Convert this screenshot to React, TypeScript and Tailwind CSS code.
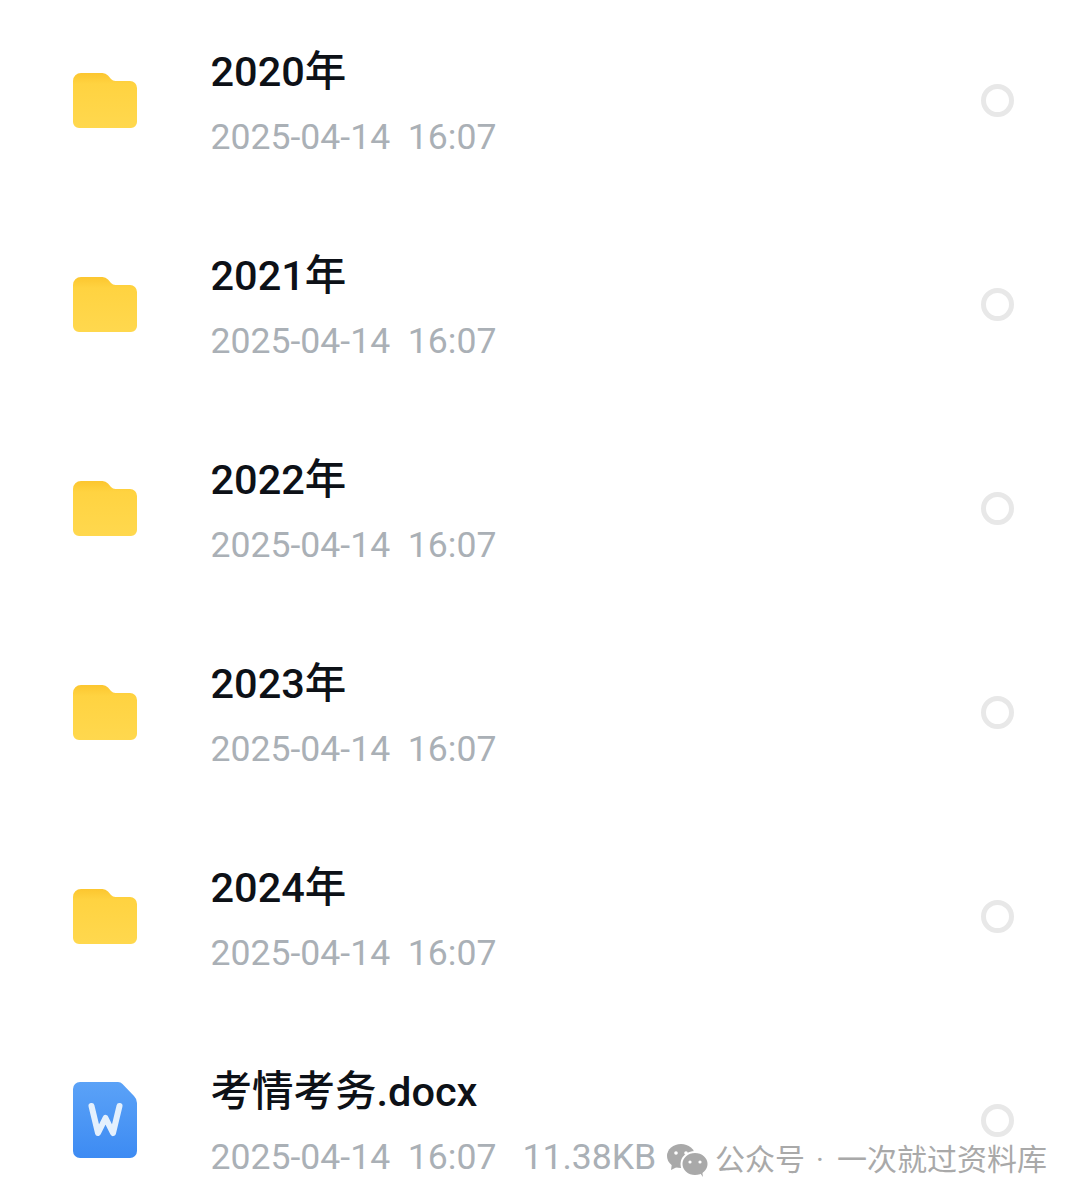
const fontStack = "font-['Roboto','Noto_Sans_CJK_SC',sans-serif]";

const rows = [
  { name: "2020年", type: "folder" },
  { name: "2021年", type: "folder" },
  { name: "2022年", type: "folder" },
  { name: "2023年", type: "folder" },
  { name: "2024年", type: "folder" },
  { name: "考情考务.docx", type: "doc", size: "11.38KB" },
];

function FolderIcon() {
  return (
    <svg width="64" height="55" viewBox="0 0 64 55" className="block">
      <defs>
        <linearGradient id="tab" x1="0" y1="0" x2="0" y2="1">
          <stop offset="0" stopColor="#fcc62f" />
          <stop offset="0.2" stopColor="#ffd341" />
          <stop offset="1" stopColor="#ffd84e" />
        </linearGradient>
      </defs>
      <path
        d="M0 8a8 8 0 0 1 8-8h21a8 8 0 0 1 6 2.500l3 3.500a6 6 0 0 0 4.500 2H57a7 7 0 0 1 7 7v34a6 6 0 0 1-6 6H6a6 6 0 0 1-6-6z"
        fill="url(#tab)"
      />
    </svg>
  );
}

function WordIcon() {
  return (
    <svg width="64" height="76" viewBox="0 0 64 76" className="block">
      <defs>
        <linearGradient id="word" x1="0" y1="0" x2="0" y2="1">
          <stop offset="0" stopColor="#5ba2f7" />
          <stop offset="1" stopColor="#3d8bf3" />
        </linearGradient>
      </defs>
      <path d="M7 0h38a6 6 0 0 1 4.500 2L61 14a10 10 0 0 1 3 7v48a7 7 0 0 1-7 7H7a7 7 0 0 1-7-7V7a7 7 0 0 1 7-7z" fill="url(#word)" />
      <path d="M18.500 24l6.500 27 7.500-15L40 51l6.500-27" fill="none" stroke="#e4f0fd" strokeWidth="6" strokeLinecap="round" strokeLinejoin="round" />
    </svg>
  );
}

function WechatMark() {
  return (
    <svg width="41" height="33" viewBox="0 0 41 33" className="block">
      <ellipse cx="14" cy="12" rx="14" ry="12" fill="#a9a9a9" />
      <path d="M5 19l-1 7 8-4z" fill="#a9a9a9" />
      <circle cx="9" cy="9" r="1.800" fill="#fff" />
      <circle cx="19" cy="9" r="1.800" fill="#fff" />
      <ellipse cx="28" cy="20" rx="13.500" ry="12" fill="#a9a9a9" stroke="#fff" strokeWidth="2" />
      <path d="M33 29l3 4-1-7z" fill="#a9a9a9" />
      <circle cx="23" cy="18" r="1.600" fill="#fff" />
      <circle cx="33" cy="18" r="1.600" fill="#fff" />
    </svg>
  );
}

export default function App() {
  return (
    <div className={`relative h-[1202px] w-[1080px] overflow-hidden bg-white ${fontStack}`}>
      <div className="-mt-[2px]">
        {rows.map((row) => (
          <div key={row.name} className="flex h-[204px] items-center pl-[73px] pr-[66px]">
            <div className="flex w-[137.500px] shrink-0">
              {row.type === "folder" ? <FolderIcon /> : <WordIcon />}
            </div>
            <div className="flex-1 translate-y-[4px]">
              <p className="text-[41.500px] leading-[56px] font-medium text-[#0d1117]">{row.name}</p>
              <p className="mt-[9px] flex text-[35.600px] leading-[56px] whitespace-pre text-[#aab0b6]">
                <span>2025-04-14  16:07</span>
                {row.size && <span className="ml-[26px]">{row.size}</span>}
              </p>
            </div>
            <div className="size-[33px] rounded-full border-[5px] border-[#e8e8e8]" />
          </div>
        ))}
      </div>

      {/* watermark sits over the last row */}
      <div className="absolute left-[667px] top-[1142px] flex items-center text-[30px] leading-[36px] text-[#a9a9a9]">
        <WechatMark />
        <span className="ml-[7px]">公众号</span>
        <span className="ml-[11px] w-[21px]">·</span>
        <span>一次就过资料库</span>
      </div>
    </div>
  );
}
